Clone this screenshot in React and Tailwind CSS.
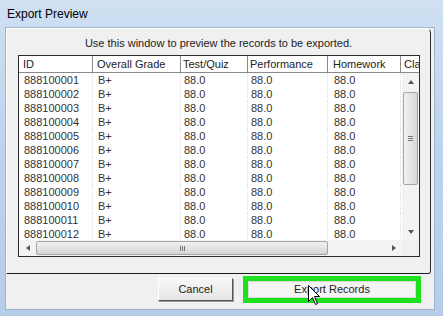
import React from 'react';

const columns = [
  { label: 'ID', width: 74, pad: 'pl-[4px]' },
  { label: 'Overall Grade', width: 88, pad: 'pl-[4px]' },
  { label: 'Test/Quiz', width: 67, pad: 'pl-[2px]' },
  { label: 'Performance', width: 80, pad: 'pl-[2px]' },
  { label: 'Homework', width: 73, pad: 'pl-[5px]' },
  { label: 'Cla', width: 18, pad: 'pl-[3px]' },
];

const rows = Array.from({ length: 12 }, (_, i) => [
  `8881000${String(i + 1).padStart(2, '0')}`,
  'B+',
  '88.0',
  '88.0',
  '88.0',
  '',
]);

const Arrow = ({ dir }) => {
  // tiny scrollbar arrow glyphs
  const pts = {
    up: '0,4 3,0 6,4',
    down: '0,0 6,0 3,4',
    left: '4,0 4,6 0,3',
    right: '0,0 0,6 4,3',
  }[dir];
  const vertical = dir === 'up' || dir === 'down';
  return (
    <svg width={vertical ? 6 : 4} height={vertical ? 4 : 6} viewBox={vertical ? '0 0 6 4' : '0 0 4 6'}>
      <polygon points={pts} fill="#555" />
    </svg>
  );
};

const Cursor = () => (
  <svg width="13" height="21" viewBox="0 0 13 21" className="absolute left-[308px] top-[285px]">
    <path
      d="M0.5 0.5 L0.5 16.5 L4.5 12.5 L7.5 19.5 L9.5 18.5 L6.5 11.5 L11.5 11.5 Z"
      fill="#fff"
      stroke="#000"
      strokeWidth="1"
      strokeLinejoin="miter"
    />
  </svg>
);

const App = () => {
  return (
    <div
      className="relative w-[443px] h-[316px] flex flex-col bg-gradient-to-b from-[#cfe0f2] via-[#bcd3ec] to-[#b5cde8] text-[#222]"
      style={{ fontFamily: '"Liberation Sans", Arial, sans-serif' }}
    >
      {/* title bar */}
      <div className="h-[27px] flex items-center pl-[7px] text-[12px] text-black">Export Preview</div>

      {/* client area */}
      <div className="ml-[5px] mr-[8px] mb-[6px] flex-1 flex flex-col bg-[#f0f0f0] border border-[#9db4cf]">
        {/* panel */}
        <div className="ml-0 mr-[3px] h-[246px] border-l border-t border-white border-r border-b border-r-[#2a2a2a] border-b-[#1a1a1a] rounded-tr-[5px] rounded-br-[3px] flex flex-col">
          <div className="h-[26px] pt-[7px] text-center text-[11px] leading-[15px] text-[#222]">
            Use this window to preview the records to be exported.
          </div>

          {/* grid */}
          <div className="ml-[11px] w-[402px] h-[202px] border border-[#2b2b2b] bg-white flex flex-col text-[11px]">
            {/* header */}
            <div className="h-[17px] flex border-b border-[#8a8a8a] shrink-0">
              {columns.map((c, i) => (
                <div
                  key={c.label}
                  style={{ width: c.width }}
                  className={`h-full leading-[16px] overflow-hidden whitespace-nowrap shrink-0 ${c.pad} ${
                    i < columns.length - 1 ? 'border-r border-[#8a8a8a]' : ''
                  }`}
                >
                  {c.label}
                </div>
              ))}
            </div>

            {/* body */}
            <div className="h-[167px] flex shrink-0">
              <div className="w-[383px] overflow-hidden">
                {rows.map((r, ri) => (
                  <div key={ri} className="h-[14px] flex">
                    {r.map((cell, ci) => (
                      <div
                        key={ci}
                        style={{ width: columns[ci].width }}
                        className={`h-full leading-[14px] shrink-0 whitespace-nowrap text-[#333] ${
                          ci === 2 || ci === 3 ? 'pl-[3px]' : ci === 4 ? 'pl-[6px]' : 'pl-[5px]'
                        } ${ci < 5 ? 'border-r border-dotted border-[#e2e2e2]' : ''}`}
                      >
                        {cell}
                      </div>
                    ))}
                  </div>
                ))}
              </div>

              {/* vertical scrollbar */}
              <div className="w-[17px] h-full bg-[#f3f3f3] flex flex-col items-center">
                <div className="h-[17px] w-full flex items-center justify-center">
                  <Arrow dir="up" />
                </div>
                <div className="mt-[2px] h-[93px] w-[15px] rounded-[2px] border border-[#a4a4a4] bg-gradient-to-r from-[#f2f2f2] to-[#d6d6d6] flex items-center justify-center">
                  <div className="flex flex-col gap-[1px]">
                    <div className="w-[5px] h-px bg-[#777]" />
                    <div className="w-[5px] h-px bg-[#777]" />
                    <div className="w-[5px] h-px bg-[#777]" />
                  </div>
                </div>
                <div className="flex-1" />
                <div className="h-[17px] w-full flex items-center justify-center">
                  <Arrow dir="down" />
                </div>
              </div>
            </div>

            {/* horizontal scrollbar */}
            <div className="h-[16px] flex bg-[#f3f3f3] shrink-0">
              <div className="w-[17px] h-full flex items-center justify-center">
                <Arrow dir="left" />
              </div>
              <div className="mt-[1px] h-[14px] w-[292px] rounded-[2px] border border-[#a4a4a4] bg-gradient-to-b from-[#f2f2f2] to-[#d4d4d4] flex items-center justify-center">
                <div className="flex gap-[1px]">
                  <div className="w-px h-[5px] bg-[#777]" />
                  <div className="w-px h-[5px] bg-[#777]" />
                  <div className="w-px h-[5px] bg-[#777]" />
                </div>
              </div>
              <div className="flex-1" />
              <div className="w-[17px] h-full flex items-center justify-center">
                <Arrow dir="right" />
              </div>
              <div className="w-[17px] h-full bg-[#f0f0f0]" />
            </div>
          </div>
        </div>

        {/* buttons */}
        <div className="h-[30px] flex items-center justify-end pr-[13px] gap-[10px] text-[11px]">
          <button className="w-[75px] h-[23px] bg-gradient-to-b from-[#f7f7f7] to-[#e6e6e6] border border-t-white border-l-white border-r-[#555] border-b-[#555] shadow-[1px_1px_0_#999] text-[#222]">
            Cancel
          </button>
          <div className="w-[178px] h-[27px] bg-[#1fe01f] p-[5px]">
            <div className="w-full h-full bg-[#f4f4f4] border border-[#d8d8d8] flex items-center justify-center text-[#222]">
              Export Records
            </div>
          </div>
        </div>
      </div>

      <Cursor />
    </div>
  );
};

export default App;
